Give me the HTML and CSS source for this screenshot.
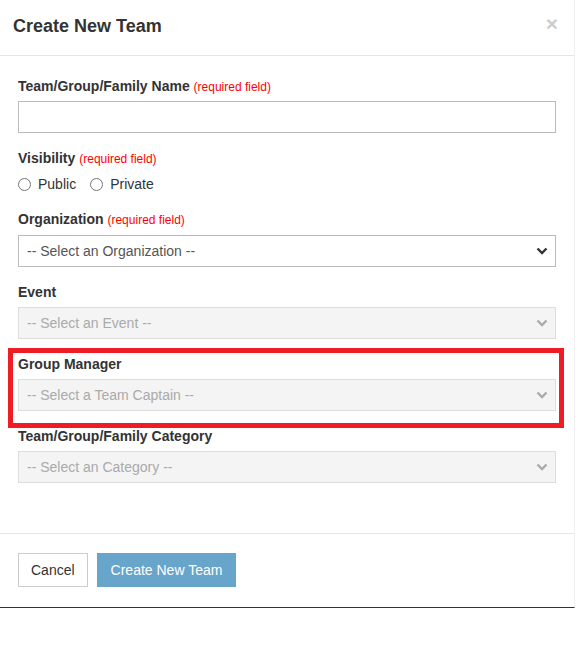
FILE: index.html
```html
<!DOCTYPE html>
<html>
<head>
<meta charset="utf-8">
<link rel="stylesheet" href="styles.css">
</head>
<body>
<div class="modal">
  <div class="modal-header">
    <h4 class="modal-title">Create New Team</h4>
    <span class="close">&times;</span>
  </div>
  <div class="modal-body">
    <div class="field field-first">
      <label class="lbl">Team/Group/Family Name <span class="req">(required field)</span></label>
      <div class="input"></div>
    </div>
    <div class="field">
      <label class="lbl">Visibility <span class="req">(required field)</span></label>
      <div class="radios">
        <span class="radio"><span class="circle"></span>Public</span>
        <span class="radio"><span class="circle"></span>Private</span>
      </div>
    </div>
    <div class="field">
      <label class="lbl">Organization <span class="req">(required field)</span></label>
      <div class="select">
        <span>-- Select an Organization --</span>
        <svg class="chev" width="12" height="8" viewBox="0 0 12 8"><path d="M1.5 1.5 L6 6 L10.5 1.5" fill="none" stroke="#333" stroke-width="2.4"/></svg>
      </div>
    </div>
    <div class="field">
      <label class="lbl">Event</label>
      <div class="select disabled">
        <span>-- Select an Event --</span>
        <svg class="chev" width="12" height="8" viewBox="0 0 12 8"><path d="M1.5 1.5 L6 6 L10.5 1.5" fill="none" stroke="#aaa" stroke-width="2.4"/></svg>
      </div>
    </div>
    <div class="field highlight-wrap">
      <label class="lbl">Group Manager</label>
      <div class="select disabled">
        <span>-- Select a Team Captain --</span>
        <svg class="chev" width="12" height="8" viewBox="0 0 12 8"><path d="M1.5 1.5 L6 6 L10.5 1.5" fill="none" stroke="#aaa" stroke-width="2.4"/></svg>
      </div>
      <div class="highlight"></div>
    </div>
    <div class="field">
      <label class="lbl">Team/Group/Family Category</label>
      <div class="select disabled">
        <span>-- Select an Category --</span>
        <svg class="chev" width="12" height="8" viewBox="0 0 12 8"><path d="M1.5 1.5 L6 6 L10.5 1.5" fill="none" stroke="#aaa" stroke-width="2.4"/></svg>
      </div>
    </div>
  </div>
  <div class="modal-footer">
    <button class="btn btn-default">Cancel</button>
    <button class="btn btn-primary">Create New Team</button>
  </div>
</div>
</body>
</html>
```
FILE: styles.css
```css
* { box-sizing: border-box; }
html, body { margin: 0; padding: 0; background: #fff; }
body {
  font-family: "Liberation Sans", Arial, sans-serif;
  font-size: 14px;
  color: #333;
}
.modal {
  width: 575px;
  background: #fff;
  border-bottom: 1px solid #333;
  border-right: 1px solid #f0f0f0;
}
.modal-header {
  height: 56px;
  border-bottom: 1px solid #e5e5e5;
  display: flex;
  align-items: center;
  justify-content: space-between;
  padding: 0 16px 2px 13px;
}
.modal-title {
  margin: 0;
  font-size: 18px;
  font-weight: bold;
  color: #333;
}
.close {
  font-size: 21px;
  font-weight: bold;
  color: #000;
  opacity: 0.2;
  line-height: 1;
  margin-top: -6px;
}
.modal-body {
  padding: 20px 18px 50px 18px;
  display: flex;
  flex-direction: column;
  gap: 15px;
}
.field {
  display: flex;
  flex-direction: column;
  gap: 5px;
}
.field-first { gap: 4px; }
.lbl {
  font-weight: bold;
  font-size: 14px;
  line-height: 20px;
  color: #333;
}
.req {
  font-weight: normal;
  font-size: 12px;
  color: #f00;
}
.input {
  height: 32px;
  border: 1px solid #bbb;
  background: #fff;
}
.radios {
  display: flex;
  gap: 14px;
  line-height: 20px;
  color: #333;
}
.radio {
  display: flex;
  align-items: center;
  gap: 7px;
}
.circle {
  width: 13px;
  height: 13px;
  border: 1px solid #767676;
  border-radius: 50%;
  background: #fff;
}
.select {
  height: 32px;
  border: 1px solid #bbb;
  background: #fff;
  color: #555;
  font-size: 14px;
  display: flex;
  align-items: center;
  justify-content: space-between;
  padding: 0 7px 0 8px;
}
.select.disabled {
  background: #f4f4f4;
  border-color: #ddd;
  color: #aaa;
}
.highlight-wrap { position: relative; }
.highlight {
  position: absolute;
  left: -10px;
  right: -8px;
  top: -6px;
  bottom: -17px;
  border: 5px solid #ee1c25;
  pointer-events: none;
}
.modal-footer {
  border-top: 1px solid #e5e5e5;
  padding: 19px 18px 20px;
  display: flex;
  gap: 9px;
}
.btn {
  font-family: "Liberation Sans", Arial, sans-serif;
  font-size: 14px;
  height: 34px;
  padding: 0 12px;
  border: 1px solid transparent;
  border-radius: 0;
  cursor: pointer;
}
.btn-default {
  background: #fff;
  border-color: #ccc;
  color: #333;
}
.btn-primary {
  background: #68a5cb;
  border-color: #68a5cb;
  color: #fff;
  padding: 0 13px;
}
```
